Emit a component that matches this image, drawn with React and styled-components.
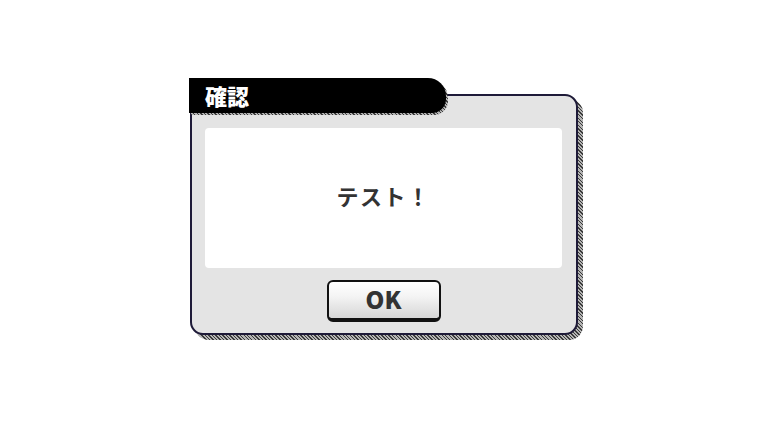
import React from 'react';
import styled, { createGlobalStyle } from 'styled-components';

const GlobalStyle = createGlobalStyle`
  html, body {
    margin: 0;
    padding: 0;
    background: #ffffff;
  }
  body {
    font-family: "Noto Sans CJK JP", "Noto Sans", sans-serif;
  }
`;

const Page = styled.div`
  display: flex;
  justify-content: center;
  width: 768px;
  height: 429px;
  padding-top: 78px;
  padding-left: 2px;
  box-sizing: border-box;
`;

// the dialog is the stacking context, so the panel's hatched shadow (z-index -1) sits behind it
const Dialog = styled.div`
  position: relative;
  z-index: 0;
  display: flex;
  flex-direction: column;
  width: 390px;
`;

const hatch = `repeating-linear-gradient(
  45deg,
  #3a3a3a 0px,
  #3a3a3a 1px,
  #b4b4b4 1px,
  #b4b4b4 2.5px
)`;

// black fill and hatched shadow are both pseudo layers, so the tab can sit above the panel
const TitleTab = styled.div`
  position: relative;
  z-index: 1;
  width: 257px;
  height: 35px;
  margin-bottom: -19px;
  margin-left: -1px;
  display: flex;
  align-items: center;
  padding-left: 16px;
  padding-bottom: 2px;
  box-sizing: border-box;
  color: #fff;
  font-size: 22px;
  font-weight: 900;
  line-height: 1;
  border-radius: 0 18px 14px 0;

  &::before,
  &::after {
    content: '';
    position: absolute;
    inset: 0;
    border-radius: inherit;
    z-index: -1;
  }
  &::before {
    transform: translate(2px, 2px);
    background: ${hatch};
  }
  &::after {
    background: #000;
  }
`;

const Panel = styled.div`
  position: relative;
  width: 388px;
  height: 241px;
  box-sizing: border-box;
  border: 2px solid #1e1a38;
  border-radius: 13px;
  background: #e4e4e4;
  padding: 32px 14px 11px 13px;
  display: flex;
  flex-direction: column;
  align-items: center;
  gap: 12px;

  &::before {
    content: '';
    position: absolute;
    left: -2px;
    top: -2px;
    right: -2px;
    bottom: -2px;
    transform: translate(5px, 5px);
    border-radius: 14px;
    background: ${hatch};
    z-index: -1;
  }
`;

const MessageBox = styled.div`
  align-self: stretch;
  height: 140px;
  padding-bottom: 6px;
  box-sizing: border-box;
  background: #fff;
  border-radius: 4px;
  display: flex;
  align-items: center;
  justify-content: center;
  color: #333;
  font-size: 22px;
  font-weight: 700;
  letter-spacing: 1.5px;
`;

const OkButton = styled.button`
  width: 114px;
  height: 42px;
  box-sizing: border-box;
  border: 2px solid #111;
  border-bottom-width: 4px;
  border-radius: 6px;
  background: linear-gradient(#ffffff 0%, #f4f4f4 40%, #d6d6d6 100%);
  color: #333;
  font-family: "Noto Sans CJK JP", "Noto Sans", sans-serif;
  font-size: 24px;
  font-weight: 900;
  line-height: 1;
  padding: 0 0 2px;
  cursor: pointer;
`;

export default function App() {
  return (
    <>
      <GlobalStyle />
      <Page>
        <Dialog>
          <TitleTab>確認</TitleTab>
          <Panel>
            <MessageBox>テスト！</MessageBox>
            <OkButton>OK</OkButton>
          </Panel>
        </Dialog>
      </Page>
    </>
  );
}
